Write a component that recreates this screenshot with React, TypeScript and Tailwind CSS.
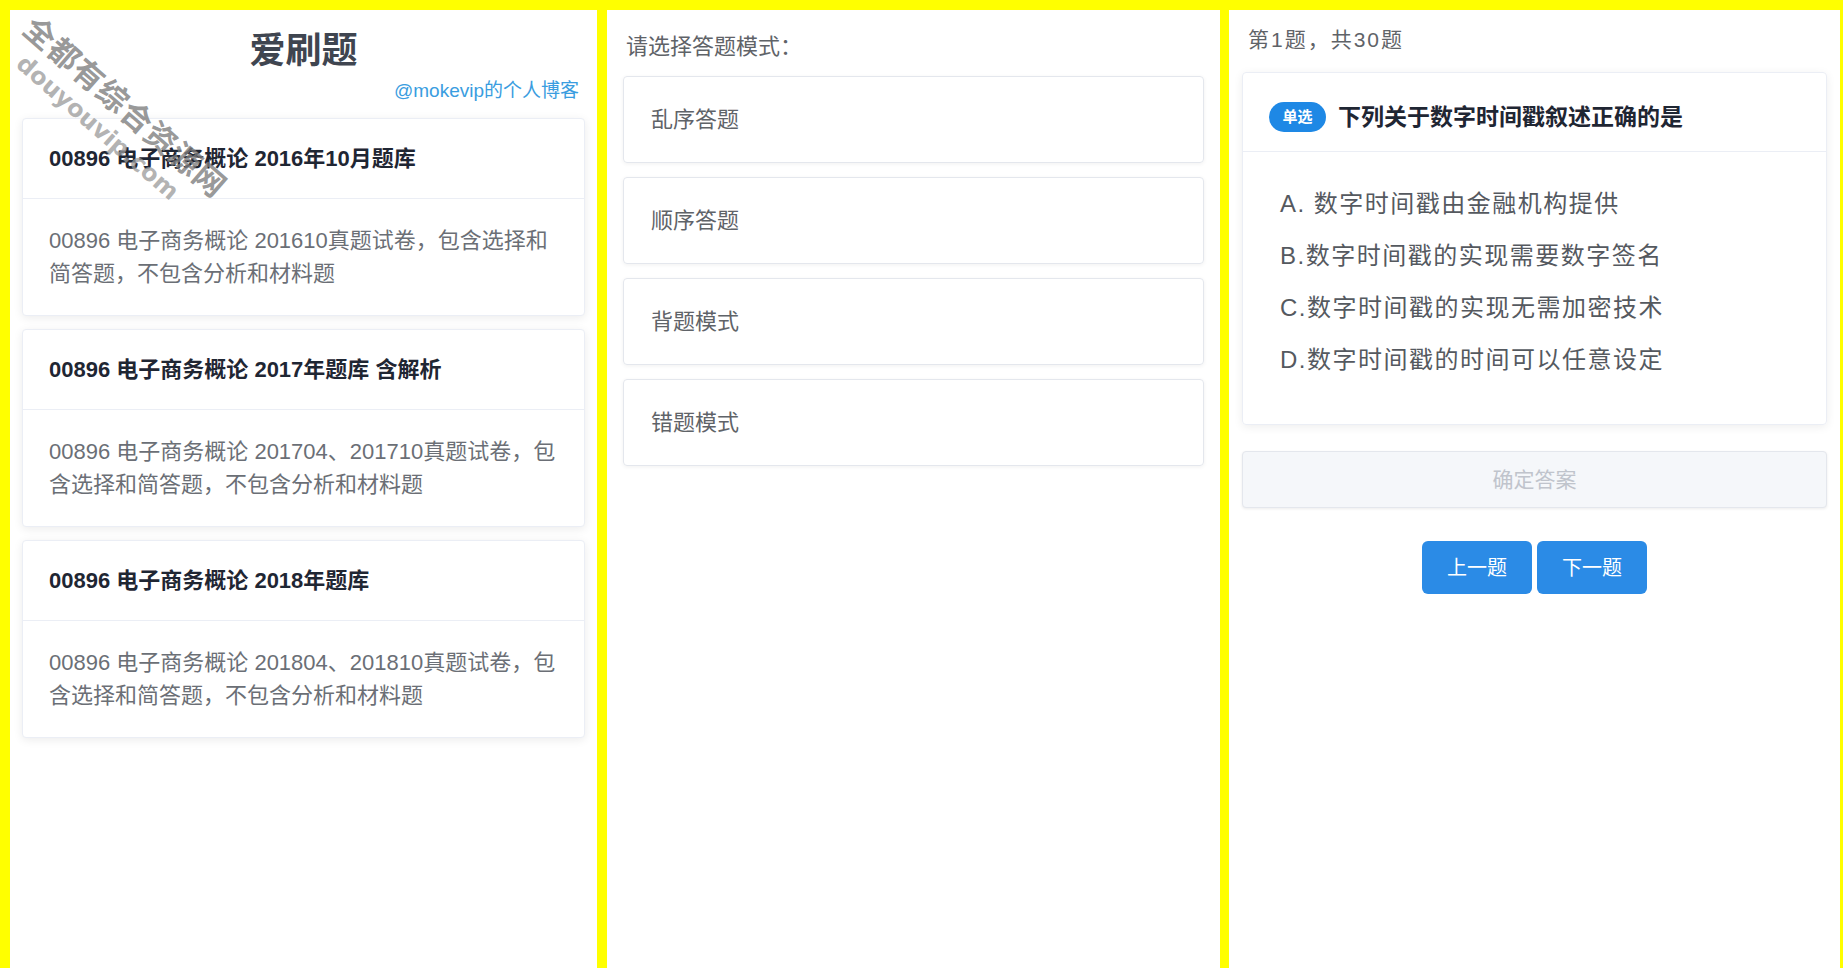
import React from "react";

const FONT = "font-['Liberation_Sans','Noto_Sans_CJK_SC',sans-serif]";

const BANKS = [
  {
    title: "00896 电子商务概论 2016年10月题库",
    desc: "00896 电子商务概论 201610真题试卷，包含选择和简答题，不包含分析和材料题",
  },
  {
    title: "00896 电子商务概论 2017年题库 含解析",
    desc: "00896 电子商务概论 201704、201710真题试卷，包含选择和简答题，不包含分析和材料题",
  },
  {
    title: "00896 电子商务概论 2018年题库",
    desc: "00896 电子商务概论 201804、201810真题试卷，包含选择和简答题，不包含分析和材料题",
  },
];

const MODES = ["乱序答题", "顺序答题", "背题模式", "错题模式"];

const OPTIONS = [
  "A. 数字时间戳由金融机构提供",
  "B.数字时间戳的实现需要数字签名",
  "C.数字时间戳的实现无需加密技术",
  "D.数字时间戳的时间可以任意设定",
];

function BankList() {
  return (
    <div className="relative w-[587px] bg-white overflow-hidden">
      {/* Header */}
      <h1 className="pt-[19px] text-center text-[36px] leading-[43px] font-bold text-[#3f4550]">爱刷题</h1>
      <div className="mt-[6px] pr-[18px] text-right text-[19px] leading-[26px] text-[#3a9de0]">
        @mokevip的个人博客
      </div>

      {/* Cards */}
      <div className="mt-[14px] mx-[12px] flex flex-col gap-[13px]">
        {BANKS.map((b) => (
          <div
            key={b.title}
            className="border border-[#ebeef5] rounded-[4px] bg-white shadow-[0_2px_10px_0_rgba(0,0,0,0.08)]"
          >
            <div className="h-[80px] flex items-center px-[26px] border-b border-[#ebeef5] text-[22px] font-bold text-[#1f2633]">
              {b.title}
            </div>
            <div className="px-[26px] py-[25px] text-[22px] leading-[33px] text-[#6b6f76]">{b.desc}</div>
          </div>
        ))}
      </div>

      {/* Watermark */}
      <div className="pointer-events-none absolute left-[18px] top-[-2px] origin-left rotate-[41deg] text-[31px] leading-none font-bold tracking-[1px] text-[#7d7d7d]/80 whitespace-nowrap">
        全都有综合资源网
      </div>
      <div className="pointer-events-none absolute left-[10px] top-[38px] origin-left rotate-[41deg] text-[24px] leading-none font-bold text-[#9a9a9a]/75 whitespace-nowrap font-['DejaVu_Sans',sans-serif]">
        douyouvip.com
      </div>
    </div>
  );
}

function ModePicker() {
  return (
    <div className="w-[613px] ml-[10px] bg-white">
      <div className="pt-[22px] pl-[19px] text-[22px] leading-[30px] text-[#5f6368]">请选择答题模式：</div>
      <div className="mt-[14px] mx-[16px] flex flex-col gap-[14px]">
        {MODES.map((m) => (
          <div
            key={m}
            className="h-[87px] flex items-center pl-[27px] border border-[#e4e7ed] rounded-[4px] shadow-[0_1px_4px_0_rgba(0,0,0,0.06)] text-[22px] text-[#5f6368]"
          >
            {m}
          </div>
        ))}
      </div>
    </div>
  );
}

function QuestionPanel() {
  return (
    <div className="flex-1 ml-[9px] mr-[3px] bg-white px-[13px]">
      <div className="pt-[15px] pl-[6px] text-[21px] leading-[30px] tracking-[2px] text-[#5f6368]">第1题，共30题</div>

      {/* Question card */}
      <div className="mt-[17px] border border-[#ebeef5] rounded-[4px] shadow-[0_2px_10px_0_rgba(0,0,0,0.07)]">
        <div className="h-[79px] flex items-center pt-[10px] pl-[26px] border-b border-[#ebeef5]">
          <span className="h-[30px] w-[57px] flex items-center justify-center rounded-full bg-[#1e88e5] text-white text-[15px] font-bold">
            单选
          </span>
          <span className="ml-[12px] text-[23px] font-bold text-[#1f2633]">下列关于数字时间戳叙述正确的是</span>
        </div>
        <div className="pt-[26px] pb-[38px] pl-[37px]">
          {OPTIONS.map((o) => (
            <div key={o} className="h-[52px] flex items-center text-[24px] tracking-[1.5px] text-[#55595f]">
              {o}
            </div>
          ))}
        </div>
      </div>

      <button className="mt-[26px] w-full h-[57px] rounded-[4px] border border-[#e4e7ed] bg-[#f5f7fa] text-[21px] text-[#c0c4cc] shadow-[0_1px_3px_0_rgba(0,0,0,0.08)]">
        确定答案
      </button>

      <div className="mt-[33px] flex justify-center gap-[5px]">
        <button className="w-[110px] h-[53px] rounded-[6px] bg-[#2b8be6] text-white text-[20px]">上一题</button>
        <button className="w-[110px] h-[53px] rounded-[6px] bg-[#2b8be6] text-white text-[20px]">下一题</button>
      </div>
    </div>
  );
}

export default function App() {
  return (
    <div className={`${FONT} h-[968px] w-[1843px] bg-[#ffff00] flex pt-[10px] pl-[10px] overflow-hidden`}>
      <BankList />
      <ModePicker />
      <QuestionPanel />
    </div>
  );
}
